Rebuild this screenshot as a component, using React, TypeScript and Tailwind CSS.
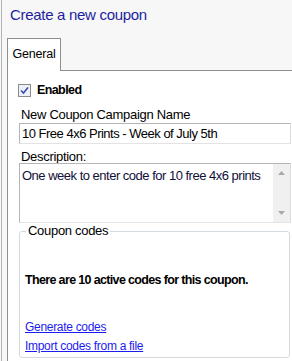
export default function App() {
  return (
    <div
      className="w-[292px] h-[361px] overflow-hidden bg-[#f7f7f7] flex flex-col text-black"
      style={{ fontFamily: '"Liberation Sans", Arial, sans-serif' }}
    >
      <div className="shrink-0 flex h-full">
        <div className="w-px shrink-0" />
        <div className="flex-1 flex flex-col border-l border-[#b4b4b4]">
          <h1 className="shrink-0 h-[38px] pl-[8px] pt-[6px] text-[15px] leading-[18px] tracking-[-0.3px] text-[#1e1e9e]">
            Create a new coupon
          </h1>

          <div className="shrink-0 flex items-end h-[33px]">
            <div className="w-[5px] h-px" />
            <div className="w-[54px] h-[33px] border border-b-0 border-[#8f8f8f] bg-white text-[12.5px] tracking-[-0.2px] flex items-center justify-center pb-[1px]">
              General
            </div>
            <div className="flex-1 h-px bg-[#8f8f8f]" />
          </div>

          <div className="flex-1 ml-[5px] border-l border-[#8f8f8f] bg-white pl-[11px] pr-[1px] flex flex-col">
            <label className="shrink-0 flex items-center gap-[6px] mt-[13px] h-[13px] -ml-[1px]">
              <span className="w-[13px] h-[13px] border border-[#8c8c8c] bg-[#eef0f8] flex items-center justify-center">
                <svg width="9" height="9" viewBox="0 0 9 9">
                  <path d="M1 4.5 L3.5 7 L8 1.5" stroke="#3a4aa8" strokeWidth="1.6" fill="none" />
                </svg>
              </span>
              <span className="text-[12.5px] font-bold leading-none tracking-[-0.6px]">Enabled</span>
            </label>

            <div className="shrink-0 mt-[11px] h-[14px] pl-[2px] text-[13px] leading-[14px] tracking-[-0.3px]">
              New Coupon Campaign Name
            </div>
            <div className="shrink-0 mt-[1px] h-[21px] border border-[#b5b5b5] border-r-[#dcdcdc] border-b-[#e3e3e3] px-[2px] text-[13px] leading-[19px] tracking-[-0.5px] whitespace-nowrap">
              10 Free 4x6 Prints - Week of July 5th
            </div>

            <div className="shrink-0 mt-[7px] h-[12px] pl-[2px] text-[13px] leading-[12px] tracking-[-0.3px]">
              Description:
            </div>
            <div className="shrink-0 h-[60px] border border-[#b5b5b5] border-r-[#dcdcdc] border-b-[#e3e3e3] flex">
              <div className="flex-1 px-[2px] pt-[4px] text-[13px] leading-[15px] tracking-[-0.5px] whitespace-nowrap text-[#10103a]">
                One week to enter code for 10 free 4x6 prints
              </div>
              <div className="w-[17px] bg-[#f0f0f0] flex flex-col justify-between items-center py-[7px]">
                <svg width="7" height="4" viewBox="0 0 7 4"><path d="M0 4 L3.5 0 L7 4 Z" fill="#a8a8a8" /></svg>
                <svg width="7" height="4" viewBox="0 0 7 4"><path d="M0 0 L3.5 4 L7 0 Z" fill="#a8a8a8" /></svg>
              </div>
            </div>

            <fieldset className="shrink-0 h-[135px] border border-[#d3dbe0] rounded-[3px] pl-[5px] mr-[1px]">
              <legend className="ml-[1px] px-[2px] text-[13px] leading-[16px] tracking-[-0.3px]">Coupon codes</legend>
              <div className="mt-[33px] h-[16px] text-[12.5px] leading-[16px] font-bold tracking-[-0.65px] whitespace-nowrap">
                There are 10 active codes for this coupon.
              </div>
              <div className="mt-[32px] flex flex-col gap-[4px] text-[12px] leading-[15px] tracking-[-0.3px] text-[#1c1cf0]">
                <a className="underline">Generate codes</a>
                <a className="underline">Import codes from a file</a>
              </div>
            </fieldset>
          </div>
        </div>
      </div>
    </div>
  );
}
